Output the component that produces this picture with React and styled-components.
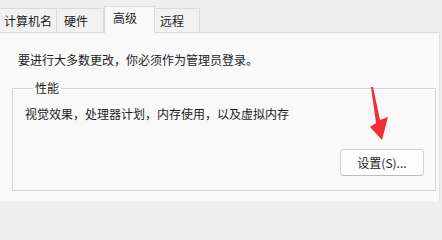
import React from 'react';
import styled, { createGlobalStyle } from 'styled-components';

const GlobalStyle = createGlobalStyle`
  html, body {
    margin: 0;
    padding: 0;
    background: #efefef;
  }
  body {
    font-family: "Noto Sans CJK SC", "Noto Sans", sans-serif;
    font-size: 12px;
    color: #1c1c1c;
  }
`;

const tabs = [
  { label: '计算机名', width: 57, pad: 4 },
  { label: '硬件', width: 47, pad: 7 },
  { label: '高级', width: 51, pad: 8, active: true },
  { label: '远程', width: 45, pad: 5 },
];

const App = () => {
  return (
    <>
      <GlobalStyle />
      <Window>
        <TabBar>
          {tabs.map((t) => (
            <Tab key={t.label} $width={t.width} $pad={t.pad} $active={t.active}>
              {t.label}
            </Tab>
          ))}
        </TabBar>
        <Panel>
          <Notice>要进行大多数更改，你必须作为管理员登录。</Notice>
          <Group>
            <Legend>性能</Legend>
            <Desc>视觉效果，处理器计划，内存使用，以及虚拟内存</Desc>
            <ButtonRow>
              <Button>设置(S)...</Button>
            </ButtonRow>
          </Group>
        </Panel>
        <Arrow width="26" height="60" viewBox="0 0 26 60">
          <polygon
            points="5,3 7,3 14,36 22,33 16,56 4,43 10,39"
            fill="#ef2e38"
          />
        </Arrow>
      </Window>
    </>
  );
};

const Window = styled.div`
  position: relative;
  width: 442px;
  height: 201px;
  display: flex;
  flex-direction: column;
  background: #efefef;
  overflow: hidden;
`;

const TabBar = styled.div`
  height: 32px;
  display: flex;
  align-items: flex-end;
`;

const Tab = styled.div`
  box-sizing: border-box;
  width: ${({ $width }) => $width}px;
  height: ${({ $active }) => ($active ? 27 : 24)}px;
  padding-left: ${({ $pad }) => $pad}px;
  padding-top: ${({ $active }) => ($active ? 3 : 4)}px;
  line-height: 16px;
  background: ${({ $active }) => ($active ? '#f9f9f9' : '#f2f2f2')};
  border: 1px solid #dadada;
  border-bottom: none;
  border-left: ${({ $active }) => ($active ? '1px solid #dadada' : 'none')};
  margin-bottom: ${({ $active }) => ($active ? -1 : 0)}px;
  position: relative;
  z-index: ${({ $active }) => ($active ? 1 : 0)};
  &:first-child {
    border-left: none;
  }
`;

const Panel = styled.div`
  flex: 1;
  width: 440px;
  box-sizing: border-box;
  background: #f9f9f9;
  border-top: 1px solid #dadada;
  border-right: 1px solid #e0e0e0;
  padding: 19px 0 0 12px;
`;

const Notice = styled.div`
  margin-left: 6px;
  line-height: 16px;
  height: 16px;
`;

const Group = styled.fieldset`
  box-sizing: border-box;
  width: 424px;
  margin: 12px 0 0 0;
  padding: 10px 11px 14px 12px;
  border: 1px solid #d6d6d6;
  box-shadow: inset 1px 1px 0 #ffffff;
`;

const Legend = styled.legend`
  margin-left: 8px;
  padding: 0 2px;
  line-height: 16px;
`;

const Desc = styled.div`
  line-height: 16px;
  height: 16px;
`;

const ButtonRow = styled.div`
  display: flex;
  justify-content: flex-end;
  margin-top: 27px;
`;

const Button = styled.button`
  box-sizing: border-box;
  width: 84px;
  height: 27px;
  padding: 0;
  font-family: inherit;
  font-size: 12px;
  color: #1c1c1c;
  background: #fdfdfd;
  border: 1px solid #d3d3d3;
  border-bottom-color: #bcbcbc;
  border-radius: 4px;
`;

const Arrow = styled.svg`
  position: absolute;
  left: 366px;
  top: 84px;
`;

export default App;
